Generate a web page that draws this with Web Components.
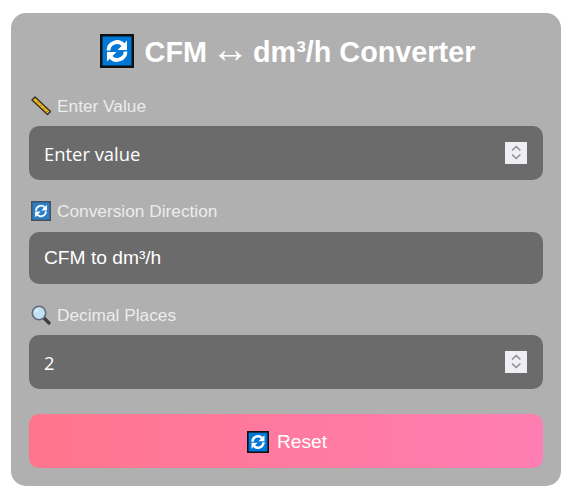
<!DOCTYPE html>
<html><head><meta charset="utf-8">
<style>
html,body{margin:0;background:#fff}
body{padding:13px 9px 5px 11px;font-family:"Liberation Sans",Arial,sans-serif}
</style></head><body>
<template id="t-card"><style>
:host{display:flex;flex-direction:column;box-sizing:border-box;width:550px;height:473px;padding:18px 18px;background:#b0b0b0;border-radius:15px;color:#fff}
::slotted(h-title){margin-bottom:25px}
</style><slot></slot></template>

<template id="t-title"><style>
:host{display:flex;justify-content:center;align-items:center;gap:11px;height:40px;padding-left:3px;font:700 28.8px/40px "Liberation Sans",sans-serif;color:#fff}
::slotted(.t){white-space:pre;margin-top:-2px}
</style><slot></slot></template>

<template id="t-arrow"><style>
:host{display:inline-block;width:30px;text-align:center;font:400 38px/40px "Liberation Sans",sans-serif}
span{display:inline-block;margin:0 -6px}
</style><span><slot></slot></span></template>

<template id="t-field"><style>
:host{display:block;margin-bottom:var(--mb,21px)}
.l{display:flex;align-items:center;gap:6px;height:20px;margin:0 0 var(--lg,10px) 2px;font:400 17.3px/20px "Liberation Sans",sans-serif;color:#ececec}
</style><div class="l"><slot name="icon"></slot><slot name="label"></slot></div><slot></slot></template>

<template id="t-box"><style>
:host{display:flex;align-items:center;justify-content:space-between;box-sizing:border-box;height:var(--h,54px);padding:0 16px 0 15px;background:#6b6b6b;border-radius:10px;font:400 var(--fs,19.2px)/22px var(--ff,"Liberation Sans"),sans-serif;color:#fff}
::slotted(.nudge){margin-top:2px}
</style><slot></slot><slot name="end"></slot></template>

<template id="t-spin"><style>
:host{display:block;width:22px;height:22px;background:#eeeef3}
svg{display:block}
</style><svg width="22" height="22" viewBox="0 0 22 22" fill="none" stroke="#8f8d9b" stroke-width="1.6"><path d="M7 8.500 11.200 4.500 15.400 8.500M7 12.500 11.200 16.500 15.400 12.500"/></svg></template>

<template id="t-button"><style>
:host{display:flex;flex:none;box-sizing:border-box;align-items:center;justify-content:center;gap:8px;height:54px;padding:1px 0 0 2px;border-radius:10px;background:linear-gradient(90deg,#ff758c,#ff7eb3);font:400 19.2px/22px "Liberation Sans",sans-serif;color:#fff}
</style><slot></slot></template>

<template id="t-refresh"><style>
:host{display:block;width:var(--s,22px);height:var(--s,22px);flex:none}
svg{display:block;width:100%;height:100%}
.a{fill:none;stroke:#fff;stroke-width:var(--sw,3.800)}
.h{fill:#fff}
</style><svg viewBox="0 0 34 34"><rect x="1.250" y="1.250" width="31.500" height="31.500" fill="var(--bg,#0078d7)" stroke="var(--bd,#111)" stroke-width="2.500"/>
<path class="a" d="M8.500 16.500a8.500 8.500 0 0 1 14.800-5.600"/><path class="h" d="M27 6.500v9.500h-9.500z"/>
<path class="a" d="M25.500 17.500a8.500 8.500 0 0 1-14.800 5.600"/><path class="h" d="M7 27.500v-9.500h9.500z"/></svg></template>

<template id="t-ruler"><style>
:host{display:block;width:20px;height:20px;flex:none}svg{display:block}
</style><svg width="20" height="20" viewBox="0 0 20 20"><path d="M1 4 4 1 19.500 15.500 16.500 18.500Z" fill="#efb81f" stroke="#3a3328" stroke-width="1.500" stroke-linejoin="round"/><path d="M6.500 7 7.500 6M9.500 10 10.500 9M12.500 13 13.500 12M15.500 16 16.500 15" stroke="#8a6a10" stroke-width="1"/></svg></template>

<template id="t-lens"><style>
:host{display:block;width:20px;height:20px;flex:none}svg{display:block}
</style><svg width="20" height="20" viewBox="0 0 20 20"><path d="M12.500 12.500 18 18" stroke="#3c3c42" stroke-width="3.200" stroke-linecap="round"/><circle cx="8" cy="8" r="6.700" fill="#c2e0f4" stroke="#5f6c76" stroke-width="1.600"/><path d="M4.500 7.500a3.800 3.800 0 0 1 3-3" fill="none" stroke="#fff" stroke-width="1.200"/></svg></template>

<conv-card>
  <h-title><x-refresh style="--s:34px"></x-refresh><span class="t">CFM <x-arrow>↔</x-arrow> dm³/h Converter</span></h-title>
  <f-field><x-ruler slot="icon"></x-ruler><span slot="label">Enter Value</span>
    <x-box style="--ff:'Open Sans';--fs:18.4px"><span class="nudge">Enter value</span><x-spin slot="end"></x-spin></x-box></f-field>
  <f-field style="--lg:11px"><x-refresh slot="icon" style="--s:20px;--bg:#2a7fc6;--bd:#46505c;--sw:3"></x-refresh><span slot="label">Conversion Direction</span>
    <x-box style="--h:52px"><span>CFM to dm³/h</span></x-box></f-field>
  <f-field style="--mb:25px"><x-lens slot="icon"></x-lens><span slot="label">Decimal Places</span>
    <x-box style="--ff:'Open Sans';--fs:18.4px"><span class="nudge">2</span><x-spin slot="end"></x-spin></x-box></f-field>
  <x-button><x-refresh style="--s:22px"></x-refresh><span>Reset</span></x-button>
</conv-card>
<script>
const defs={'conv-card':'t-card','h-title':'t-title','x-arrow':'t-arrow','f-field':'t-field','x-box':'t-box','x-spin':'t-spin','x-button':'t-button','x-refresh':'t-refresh','x-ruler':'t-ruler','x-lens':'t-lens'};
for(const [n,id] of Object.entries(defs)){
  customElements.define(n,class extends HTMLElement{constructor(){super();this.attachShadow({mode:'open'}).appendChild(document.getElementById(id).content.cloneNode(true));}});
}
</script>
</body></html>
